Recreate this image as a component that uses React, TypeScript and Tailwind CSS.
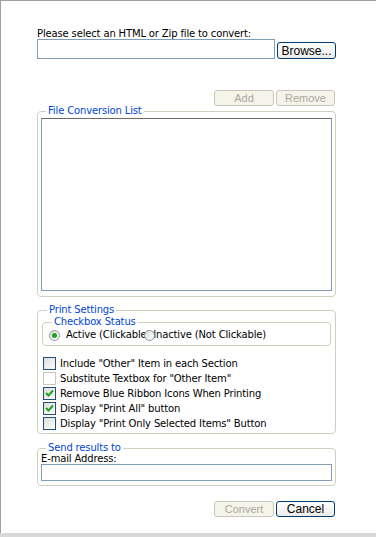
import React from "react";

const font = { fontFamily: '"DejaVu Sans", Verdana, sans-serif', letterSpacing: "-0.15px" } as React.CSSProperties;

function XPButton({ label, disabled, w = "w-[59px]", h = "h-[17px]" }: { label: string; disabled?: boolean; w?: string; h?: string }) {
  return disabled ? (
    <div
      className={`${w} ${h} rounded-[3px] border border-[#c9c7ba] bg-[#f5f4ea] text-[#aca899] text-[11px] flex items-center justify-center leading-none`}
      style={{ fontFamily: '"Liberation Sans", Arial, sans-serif', letterSpacing: 0 }}
    >
      {label}
    </div>
  ) : (
    <div
      className={`${w} ${h} rounded-[3px] border border-[#003c74] bg-gradient-to-b from-white to-[#ecebe6] text-black text-[12px] flex items-center justify-center leading-none`}
      style={{ fontFamily: '"Liberation Sans", Arial, sans-serif', letterSpacing: 0 }}
    >
      {label}
    </div>
  );
}

function Checkbox({ checked, disabled }: { checked?: boolean; disabled?: boolean }) {
  return (
    <div
      className={`w-[13px] h-[13px] shrink-0 border ${disabled ? "border-[#cac8bb] bg-white" : "border-[#1c5180] bg-gradient-to-br from-[#dcdcd7] to-white"} flex items-center justify-center`}
    >
      {checked && (
        <svg width="9" height="9" viewBox="0 0 9 9">
          <path d="M1 4 L3.5 6.5 L8 1.5" stroke="#21a121" strokeWidth="2" fill="none" />
        </svg>
      )}
    </div>
  );
}

function Radio({ checked, className = "" }: { checked?: boolean; className?: string }) {
  return (
    <div className={`w-[11px] h-[11px] shrink-0 rounded-full border border-[#8a96a2] bg-gradient-to-br from-[#dcdcd7] to-white flex items-center justify-center ${className}`}>
      {checked && <div className="w-[5px] h-[5px] rounded-full bg-[#21a121]" />}
    </div>
  );
}

function Legend({ children }: { children: React.ReactNode }) {
  return <legend className="ml-[5px] px-[2px] text-[10px] leading-[12px] text-[#0046d5]">{children}</legend>;
}

export default function App() {
  return (
    <div className="w-[376px] h-[537px] bg-white flex flex-col overflow-hidden" style={font}>
      <div className="flex-1 border-t border-l border-[#a0a0a0] pl-[36px] pt-[28px]">
        <div className="w-[299px] flex flex-col">
          <div className="text-[10px] leading-[10px] text-[#000] h-[10px]">Please select an HTML or Zip file to convert:</div>
          <div className="flex items-end gap-[2px]">
            <div className="w-[238px] h-[20px] border border-[#7f9db9] bg-white" />
            <XPButton label="Browse..." />
          </div>
          <div className="flex justify-end gap-[2px] mt-[31px] pr-[1px]">
            <XPButton label="Add" disabled h="h-[16px]" w="w-[60px]" />
            <XPButton label="Remove" disabled h="h-[16px]" />
          </div>

          <fieldset className="mt-[-1px] h-[192px] border border-[#d0d0bf] rounded-[4px] px-[3px] pb-[4px]">
            <Legend>File Conversion List</Legend>
            <div className="h-[173px] border border-[#7f9db9] border-t-[#6b6b6b] bg-white mt-[1px]" />
          </fieldset>

          <fieldset className="mt-[7px] h-[130px] border border-[#d0d0bf] rounded-[4px] px-[4px]">
            <Legend>Print Settings</Legend>
            <fieldset className="h-[30px] border border-[#d0d0bf] rounded-[4px] px-[4px]">
              <Legend>Checkbox Status</Legend>
              <div className="flex items-center text-[10px] leading-[12px] text-black mt-[1px]">
                <Radio checked className="ml-[2px]" />
                <span className="ml-[6px]">Active (Clickable)</span>
                <Radio className="ml-[-6px] relative" />
                <span className="ml-[-2px]">Inactive (Not Clickable)</span>
              </div>
            </fieldset>
            <div className="flex flex-col mt-[10px] text-[10px] leading-[12px] text-black">
              {[
                { t: 'Include "Other" Item in each Section' },
                { t: 'Substitute Textbox for "Other Item"', d: true },
                { t: "Remove Blue Ribbon Icons When Printing", c: true },
                { t: 'Display "Print All" button', c: true },
                { t: 'Display "Print Only Selected Items" Button' },
              ].map((r, i) => (
                <div key={i} className="flex items-center h-[15px] gap-[4px] ml-[1px]">
                  <Checkbox checked={r.c} disabled={r.d} />
                  <span>{r.t}</span>
                </div>
              ))}
            </div>
          </fieldset>

          <fieldset className="mt-[8px] h-[44px] border border-[#d0d0bf] rounded-[4px] px-[3px]">
            <Legend>Send results to</Legend>
            <div className="text-[10px] leading-[10px] text-black">E-mail Address:</div>
            <div className="h-[17px] border border-[#7f9db9] bg-white" />
          </fieldset>

          <div className="flex justify-end gap-[2px] mt-[15px] pr-[1px]">
            <XPButton label="Convert" disabled h="h-[16px]" w="w-[60px]" />
            <XPButton label="Cancel" h="h-[16px]" />
          </div>
        </div>
      </div>
      <div className="h-[4px] bg-[#d8d8d8] shrink-0" />
    </div>
  );
}
